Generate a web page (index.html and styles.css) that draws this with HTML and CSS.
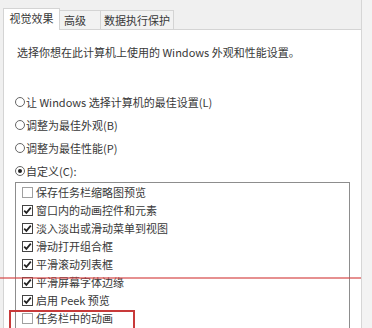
FILE: index.html
```html
<!DOCTYPE html>
<html lang="zh-CN">
<head>
<meta charset="utf-8">
<link rel="stylesheet" href="styles.css">
</head>
<body>
<div class="screen">
  <div class="tabs">
    <div class="tab tab-active tab-w1">视觉效果</div>
    <div class="tab tab-w2">高级</div>
    <div class="tab tab-w3">数据执行保护</div>
  </div>
  <div class="panel">
    <p class="desc">选择你想在此计算机上使用的 Windows 外观和性能设置。</p>
    <div class="radios">
      <div class="radio"><span class="circle"></span>让 Windows 选择计算机的最佳设置(L)</div>
      <div class="radio"><span class="circle"></span>调整为最佳外观(B)</div>
      <div class="radio"><span class="circle"></span>调整为最佳性能(P)</div>
      <div class="radio"><span class="circle circle-on"></span>自定义(C):</div>
    </div>
    <div class="listbox">
      <div class="item"><span class="cb"></span>保存任务栏缩略图预览</div>
      <div class="item"><span class="cb cb-on"><svg viewBox="0 0 11 11" width="11" height="11"><path d="M2.2 5.6 L4.4 7.9 L8.8 2.6" fill="none" stroke="#222" stroke-width="1.7"/></svg></span>窗口内的动画控件和元素</div>
      <div class="item"><span class="cb cb-on"><svg viewBox="0 0 11 11" width="11" height="11"><path d="M2.2 5.6 L4.4 7.9 L8.8 2.6" fill="none" stroke="#222" stroke-width="1.7"/></svg></span>淡入淡出或滑动菜单到视图</div>
      <div class="item"><span class="cb cb-on"><svg viewBox="0 0 11 11" width="11" height="11"><path d="M2.2 5.6 L4.4 7.9 L8.8 2.6" fill="none" stroke="#222" stroke-width="1.7"/></svg></span>滑动打开组合框</div>
      <div class="item"><span class="cb cb-on"><svg viewBox="0 0 11 11" width="11" height="11"><path d="M2.2 5.6 L4.4 7.9 L8.8 2.6" fill="none" stroke="#222" stroke-width="1.7"/></svg></span>平滑滚动列表框</div>
      <div class="item"><span class="cb cb-on"><svg viewBox="0 0 11 11" width="11" height="11"><path d="M2.2 5.6 L4.4 7.9 L8.8 2.6" fill="none" stroke="#222" stroke-width="1.7"/></svg></span>平滑屏幕字体边缘</div>
      <div class="item"><span class="cb cb-on"><svg viewBox="0 0 11 11" width="11" height="11"><path d="M2.2 5.6 L4.4 7.9 L8.8 2.6" fill="none" stroke="#222" stroke-width="1.7"/></svg></span>启用 Peek 预览</div>
      <div class="item"><span class="cb"></span>任务栏中的动画</div>
    </div>
  </div>
  <div class="redline"></div>
  <div class="redbox"></div>
</div>
</body>
</html>
```
FILE: styles.css
```css
html, body {
  margin: 0;
  padding: 0;
}
body {
  width: 372px;
  height: 328px;
  overflow: hidden;
  background: #f3f3f3;
  font-family: "Noto Sans CJK SC", "Noto Sans", sans-serif;
  font-size: 11px;
  color: #383838;
}
.screen {
  position: relative;
  width: 362px;
  height: 328px;
  overflow: hidden;
  box-sizing: border-box;
  padding: 8px 0 0 3px;
  border-right: 1px solid #d6d6d6;
  background: #f0f0f0;
}
.tabs {
  display: flex;
  align-items: flex-end;
  height: 21px;
}
.tab {
  box-sizing: border-box;
  height: 19px;
  border: 1px solid #d4d4d4;
  border-bottom: none;
  background: #f2f2f2;
  line-height: 18px;
  text-align: center;
  margin-left: -1px;
  white-space: nowrap;
}
.tab-active {
  position: relative;
  z-index: 1;
  height: 22px;
  margin-bottom: -1px;
  margin-left: 0;
  background: #fff;
  line-height: 19px;
}
.tab-w1 { width: 57px; }
.tab-w2 { width: 42px; text-align: left; padding-left: 4px; }
.tab-w3 { width: 74px; }
.panel {
  box-sizing: border-box;
  height: 299px;
  border: 1px solid #d4d4d4;
  border-right: none;
  border-bottom: none;
  background: #fff;
  padding: 0 0 0 11px;
}
.desc {
  margin: 14px 0 0 2px;
  line-height: 16px;
  white-space: nowrap;
}
.radios {
  margin-top: 30px;
  display: flex;
  flex-direction: column;
}
.radio {
  display: flex;
  align-items: center;
  height: 23px;
  white-space: nowrap;
}
.circle {
  box-sizing: border-box;
  width: 10px;
  height: 10px;
  border: 1px solid #666;
  border-radius: 50%;
  margin-right: 1px;
  display: flex;
  align-items: center;
  justify-content: center;
  flex: none;
}
.circle-on::after {
  content: "";
  width: 4px;
  height: 4px;
  border-radius: 50%;
  background: #222;
}
.listbox {
  box-sizing: border-box;
  width: 335px;
  height: 146px;
  overflow: hidden;
  border: 1px solid #8d8d8d;
  border-bottom: none;
  padding-left: 6px;
}
.item {
  display: flex;
  align-items: center;
  height: 18px;
  white-space: nowrap;
}
.cb {
  box-sizing: border-box;
  width: 11px;
  height: 11px;
  border: 1px solid #a0a0a0;
  margin-right: 3px;
  flex: none;
  display: flex;
  align-items: center;
  justify-content: center;
  background: #fff;
}
.cb-on {
  border-color: #444;
}
.cb svg {
  display: block;
  margin: -1px;
}
.redline {
  position: absolute;
  left: 0;
  top: 277px;
  width: 362px;
  height: 2px;
  background: rgba(214, 70, 70, 0.6);
}
.redbox {
  position: absolute;
  left: 9px;
  top: 310px;
  width: 126px;
  height: 18px;
  box-sizing: border-box;
  border: 2px solid #c83a3a;
  border-bottom: none;
}
```
